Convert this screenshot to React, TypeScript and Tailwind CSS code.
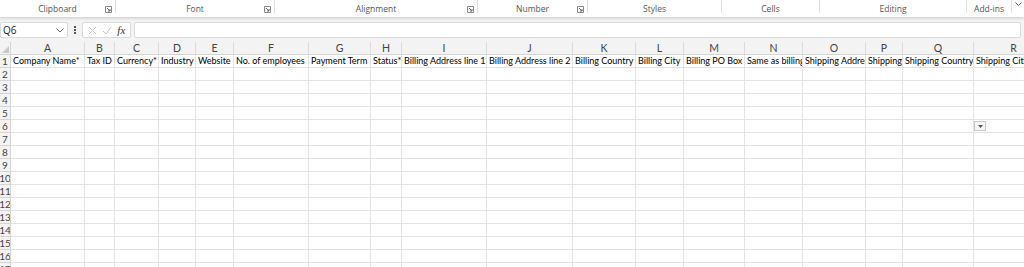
import React from "react";

const columns = [
  { key: "A", width: 74, title: "Company Name*" },
  { key: "B", width: 30, title: "Tax ID" },
  { key: "C", width: 44, title: "Currency*" },
  { key: "D", width: 37, title: "Industry" },
  { key: "E", width: 38, title: "Website" },
  { key: "F", width: 75, title: "No. of employees" },
  { key: "G", width: 62, title: "Payment Term" },
  { key: "H", width: 31, title: "Status*" },
  { key: "I", width: 85, title: "Billing Address line 1" },
  { key: "J", width: 86, title: "Billing Address line 2" },
  { key: "K", width: 63, title: "Billing Country" },
  { key: "L", width: 48, title: "Billing City" },
  { key: "M", width: 61, title: "Billing PO Box" },
  { key: "N", width: 58, title: "Same as billing address" },
  { key: "O", width: 63, title: "Shipping Address line 1" },
  { key: "P", width: 37, title: "Shipping Address line 2" },
  { key: "Q", width: 71, title: "Shipping Country" },
  { key: "R", width: 80, title: "Shipping City" },
];

const groups = [
  { label: "Clipboard", width: 116, launcher: true },
  { label: "Font", width: 159, launcher: true },
  { label: "Alignment", width: 203, launcher: true },
  { label: "Number", width: 110, launcher: true },
  { label: "Styles", width: 134, launcher: false },
  { label: "Cells", width: 98, launcher: false },
  { label: "Editing", width: 147, launcher: false },
  { label: "Add-ins", width: 45, launcher: false },
];

function Launcher() {
  return (
    <svg width="7" height="7" viewBox="0 0 7 7" className="shrink-0">
      <path d="M0.5 0.5h6v6h-6z" fill="none" stroke="#8a8a8a" strokeWidth="1" />
      <path d="M2 2l3 3M5 3v2H3" fill="none" stroke="#6a6a6a" strokeWidth="1" />
    </svg>
  );
}

function RibbonLabels() {
  return (
    <div className="flex h-[17px] bg-white shadow-[0_1px_3px_rgba(0,0,0,0.18)] relative z-10">
      {groups.map((g) => (
        <div
          key={g.label}
          style={{ width: g.width }}
          className="relative flex items-center shrink-0 border-r border-[#e1e1e1] h-[13px]"
        >
          <span className="flex-1 text-center text-[8.5px] text-[#555] leading-[13px] pt-[4px]">
            {g.label}
          </span>
          {g.launcher && (
            <span className="absolute right-[3px] top-[6px]">
              <Launcher />
            </span>
          )}
        </div>
      ))}
      <div className="flex-1 flex justify-end pr-[2px] pt-[2px]">
        <svg width="7" height="5" viewBox="0 0 7 5">
          <path d="M0.5 0.5l3 3 3-3" fill="none" stroke="#555" strokeWidth="1" />
        </svg>
      </div>
    </div>
  );
}

function FormulaBar() {
  return (
    <div className="flex items-center h-[25px] bg-[#f3f3f3] pt-[1px]">
      <div className="flex items-center w-[68px] h-[16px] bg-white border border-[#dadada] rounded-[2px] pl-[2px] pr-[3px]">
        <span className="flex-1 text-[10px] text-[#222]">Q6</span>
        <svg width="8" height="5" viewBox="0 0 8 5">
          <path d="M0.5 0.5l3.5 3.5 3.5-3.5" fill="none" stroke="#666" strokeWidth="1" />
        </svg>
      </div>
      <div className="w-[14px] flex flex-col items-center gap-[1.5px]">
        <span className="w-[1.5px] h-[1.5px] bg-[#555]" />
        <span className="w-[1.5px] h-[1.5px] bg-[#555]" />
        <span className="w-[1.5px] h-[1.5px] bg-[#555]" />
      </div>
      <div className="flex items-center justify-around w-[49px] h-[16px] bg-white border border-[#dadada] rounded-[2px] px-[2px]">
        <svg width="9" height="9" viewBox="0 0 9 9">
          <path d="M1 1l7 7M8 1l-7 7" stroke="#c4c4c4" strokeWidth="1" />
        </svg>
        <svg width="10" height="9" viewBox="0 0 10 9">
          <path d="M1 5l3 3 5-7" fill="none" stroke="#c4c4c4" strokeWidth="1" />
        </svg>
        <span className="italic text-[11px] text-[#333] leading-none font-['Liberation_Serif',serif]">fx</span>
      </div>
      <div className="flex-1 ml-[3px] mr-[3px] h-[16px] bg-white border border-[#dadada] rounded-[2px]" />
    </div>
  );
}

function Grid() {
  const rows = Array.from({ length: 17 }, (_, i) => i + 1);
  return (
    <div className="bg-white font-['Lato',sans-serif]">
      <div className="flex h-[13px] bg-[#f3f3f3] border-b border-[#d5d5d5]">
        <div className="w-[11px] shrink-0 border-r border-[#d5d5d5] relative">
          <svg width="7" height="7" viewBox="0 0 7 7" className="absolute right-[1px] bottom-[1px]">
            <path d="M7 0v7H0z" fill="#c8c8c8" />
          </svg>
        </div>
        {columns.map((c) => (
          <div
            key={c.key}
            style={{ width: c.width }}
            className="shrink-0 border-r border-[#dcdcdc] text-center text-[10.5px] leading-[13px] text-[#444]"
          >
            {c.key}
          </div>
        ))}
      </div>
      {rows.map((r) => (
        <div key={r} className="flex h-[13px]">
          <div className="w-[11px] shrink-0 bg-[#f3f3f3] border-r border-b border-[#d5d5d5] flex justify-center overflow-hidden text-[10px] leading-[12px] text-[#444]">
            <span className="whitespace-nowrap">{r}</span>
          </div>
          {columns.map((c) => (
            <div
              key={c.key}
              style={{ width: c.width }}
              className="shrink-0 border-r border-b border-[#e3e3e3] overflow-hidden whitespace-nowrap text-[9px] leading-[12px] text-black pl-[2px]"
            >
              {r === 1 ? c.title : ""}
            </div>
          ))}
        </div>
      ))}
    </div>
  );
}

export default function App() {
  return (
    <div className="w-[1024px] h-[267px] overflow-hidden bg-white font-['Open_Sans',sans-serif] relative">
      <RibbonLabels />
      <FormulaBar />
      <Grid />
      {/* validation dropdown for Q6 */}
      <div className="absolute left-[974px] top-[121px] w-[12px] h-[10px] bg-[#f6f6f6] border border-[#c9c9c9] flex items-center justify-center">
        <svg width="5" height="3" viewBox="0 0 5 3">
          <path d="M0 0h5L2.5 3z" fill="#555" />
        </svg>
      </div>
    </div>
  );
}
